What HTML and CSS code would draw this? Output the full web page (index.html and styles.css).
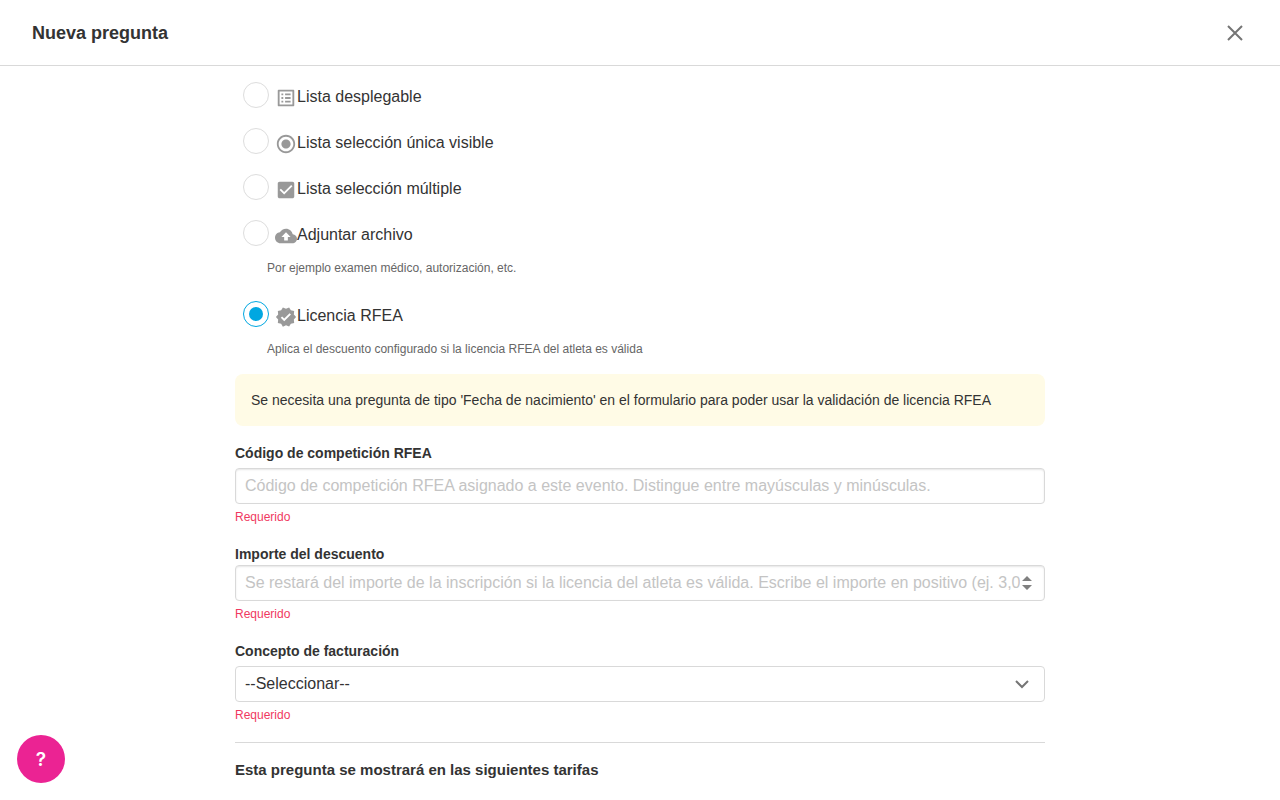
FILE: index.html
```
<!DOCTYPE html>
<html lang="es">
<head>
	<meta charset="utf-8">
	<meta name="viewport" content="width=device-width, initial-scale=1">
	<title>Nueva pregunta</title>
	<link rel="stylesheet" href="styles.css">
</head>
<body>
	<header class="modal-header">
		<h1 class="modal-title">Nueva pregunta</h1>
		<button type="button" class="close" aria-label="Cerrar">
			<svg width="24" height="24" viewBox="0 0 24 24"><path d="M4 5l14 14M18 5L4 19" fill="none" stroke="currentColor" stroke-width="2"/></svg>
		</button>
	</header>

	<form class="modal-body">
		<label class="option">
			<input type="radio" name="type" value="select">
			<svg class="option-icon" viewBox="0 0 24 24"><path d="M19 5v14H5V5h14m1.1-2H3.9c-.5 0-.9.4-.9.9v16.2c0 .4.4.9.9.9h16.2c.4 0 .9-.5.9-.9V3.9c0-.5-.5-.9-.9-.9zM11 7h6v2h-6V7zm0 4h6v2h-6v-2zm0 4h6v2h-6zM7 7h2v2H7zm0 4h2v2H7zm0 4h2v2H7z"/></svg>
			<span class="option-text">Lista desplegable</span>
		</label>
		<label class="option">
			<input type="radio" name="type" value="radio">
			<svg class="option-icon" viewBox="0 0 24 24"><path d="M12 7c-2.76 0-5 2.24-5 5s2.24 5 5 5 5-2.24 5-5-2.24-5-5-5zm0-5C6.48 2 2 6.48 2 12s4.48 10 10 10 10-4.48 10-10S17.52 2 12 2zm0 18c-4.42 0-8-3.58-8-8s3.58-8 8-8 8 3.58 8 8-3.58 8-8 8z"/></svg>
			<span class="option-text">Lista selección única visible</span>
		</label>
		<label class="option">
			<input type="radio" name="type" value="checkbox">
			<svg class="option-icon" viewBox="0 0 24 24"><path d="M19 3H5c-1.11 0-2 .9-2 2v14c0 1.1.89 2 2 2h14c1.11 0 2-.9 2-2V5c0-1.1-.89-2-2-2zm-9 14l-5-5 1.41-1.41L10 14.17l7.59-7.59L19 8l-9 9z"/></svg>
			<span class="option-text">Lista selección múltiple</span>
		</label>
		<label class="option">
			<input type="radio" name="type" value="file" aria-describedby="file-hint">
			<svg class="option-icon" viewBox="0 0 24 24"><path d="M19.35 10.04C18.67 6.59 15.64 4 12 4 9.11 4 6.6 5.64 5.35 8.04 2.34 8.36 0 10.91 0 14c0 3.31 2.69 6 6 6h13c2.76 0 5-2.24 5-5 0-2.64-2.05-4.78-4.65-4.96zM14 13v4h-4v-4H7l5-5 5 5h-3z"/></svg>
			<span class="option-text">Adjuntar archivo</span>
		</label>
		<p class="hint" id="file-hint">Por ejemplo examen médico, autorización, etc.</p>
		<label class="option">
			<input type="radio" name="type" value="rfea" aria-describedby="rfea-hint" checked>
			<svg class="option-icon" viewBox="0 0 24 24"><path d="M23 12l-2.44-2.79.34-3.69-3.61-.82-1.89-3.2L12 2.96 8.6 1.5 6.71 4.69 3.1 5.5l.34 3.7L1 12l2.44 2.79-.34 3.7 3.61.82L8.6 22.5l3.4-1.47 3.4 1.46 1.89-3.19 3.61-.82-.34-3.69L23 12zm-12.91 4.72l-3.8-3.81 1.48-1.48 2.32 2.33 5.85-5.87 1.48 1.48-7.33 7.35z"/></svg>
			<span class="option-text">Licencia RFEA</span>
		</label>
		<p class="hint" id="rfea-hint">Aplica el descuento configurado si la licencia RFEA del atleta es válida</p>

		<div class="alert">Se necesita una pregunta de tipo 'Fecha de nacimiento' en el formulario para poder usar la validación de licencia RFEA</div>

		<div class="field">
			<label class="field-label" for="code">Código de competición RFEA</label>
			<input class="control" type="text" id="code" placeholder="Código de competición RFEA asignado a este evento. Distingue entre mayúsculas y minúsculas.">
			<div class="error">Requerido</div>
		</div>
		<div class="field">
			<label class="field-label field-label-tight" for="amount">Importe del descuento</label>
			<div class="control-wrap">
				<input class="control control-number" type="number" id="amount" placeholder="Se restará del importe de la inscripción si la licencia del atleta es válida. Escribe el importe en positivo (ej. 3,00)">
				<svg class="spinner" width="10" height="16" viewBox="0 0 10 16"><path d="M0 6l5-5 5 5zM0 10h10l-5 5z"/></svg>
			</div>
			<div class="error">Requerido</div>
		</div>
		<div class="field">
			<label class="field-label" for="concept">Concepto de facturación</label>
			<div class="control-wrap">
				<select class="control control-select" id="concept">
					<option>--Seleccionar--</option>
				</select>
				<svg class="chevron" width="16" height="16" viewBox="0 0 16 16"><path d="M2 5l6 6 6-6"/></svg>
			</div>
			<div class="error">Requerido</div>
		</div>

		<h2 class="section-title">Esta pregunta se mostrará en las siguientes tarifas</h2>
	</form>

	<button type="button" class="help">?</button>
</body>
</html>
```

FILE: styles.css
```
* {box-sizing: border-box;}

body {
	margin: 0;
	font-family: "Liberation Sans", Arial, sans-serif;
	font-size: 16px;
	color: #333;
	background: #fff;
}

/* header */
.modal-header {
	display: flex;
	align-items: center;
	justify-content: space-between;
	height: 66px;
	padding: 0 32px;
	border-bottom: 1px solid #d9d9d9;
}
.modal-title {margin: 0; font-size: 18px; line-height: 24px;}
.close {
	display: flex;
	padding: 0;
	border: 0;
	background: none;
	color: #757575;
	cursor: pointer;
}

.modal-body {
	max-width: 810px;
	margin: 0 auto;
	padding: 6px 0 16px;
}

/* question types */
.option {
	display: flex;
	align-items: center;
	height: 46px;
	padding-left: 8px;
	cursor: pointer;
}
.option input {
	appearance: none;
	flex: none;
	width: 26px;
	height: 26px;
	margin: 0 6px 0 0;
	padding: 5px;
	border: 1px solid #ddd;
	border-radius: 50%;
}
.option input:checked {
	border-color: #00a7e1;
	background: #00a7e1 content-box;
}
.option-icon {
	flex: none;
	width: 22px;
	height: 22px;
	margin-top: 6px;
	fill: #999;
}
.option-text {padding-top: 4px; line-height: 24px;}
.hint {
	margin: 3px 0 14px 32px;
	font-size: 12px;
	line-height: 18px;
	color: #666;
}

.alert {
	margin: 16px 0 17px;
	padding: 16px;
	border-radius: 8px;
	background: #fffbe6;
	font-size: 14px;
	line-height: 20px;
}

/* fields */
.field {margin-bottom: 18px;}
.field-label {
	display: block;
	margin-bottom: 5px;
	font-size: 14px;
	font-weight: bold;
	line-height: 20px;
}
.field-label-tight {margin-bottom: 1px;}
.control {
	display: block;
	width: 100%;
	height: 36px;
	padding: 0 9px;
	border: 1px solid #d9d9d9;
	border-radius: 4px;
	background: #fff;
	box-shadow: inset 0 1px 2px rgba(0, 0, 0, .1);
	font: inherit;
	color: inherit;
}
.control::placeholder {color: #c4c4c4; opacity: 1;}
.control-wrap {position: relative;}
.control-number {appearance: textfield; padding-right: 24px;}
.control-number::-webkit-inner-spin-button {appearance: none; margin: 0;}
.control-select {appearance: none; padding-bottom: 2px; box-shadow: none;}
.spinner, .chevron {position: absolute; top: 10px; pointer-events: none;}
.spinner {right: 13px; fill: #808080;}
.chevron {right: 15px; fill: none; stroke: #757575; stroke-width: 2;}
.error {
	margin-top: 4px;
	font-size: 12px;
	line-height: 18px;
	color: #f0395f;
}

.section-title {
	margin: 0;
	padding-top: 16px;
	border-top: 1px solid #d9d9d9;
	font-size: 15px;
	line-height: 22px;
}

.help {
	position: fixed;
	left: 17px;
	bottom: 17px;
	width: 48px;
	height: 48px;
	padding: 0;
	border: 0;
	border-radius: 50%;
	background: #eb2393;
	color: #fff;
	font: 600 19px Inter, sans-serif;
	cursor: pointer;
}
```
